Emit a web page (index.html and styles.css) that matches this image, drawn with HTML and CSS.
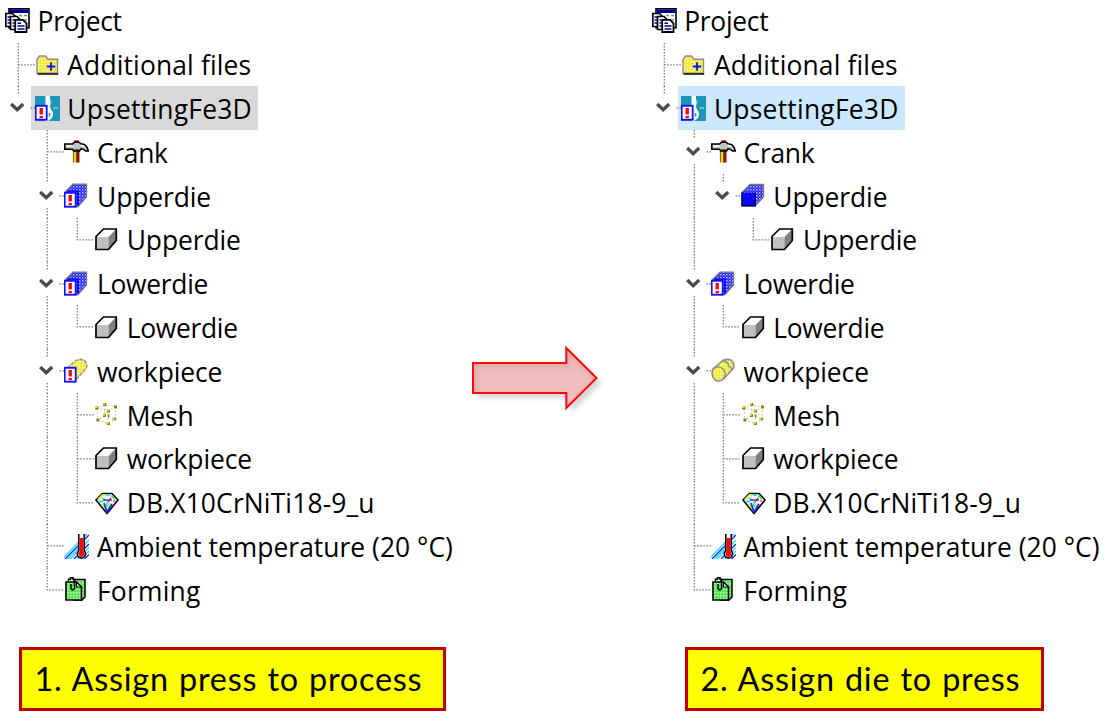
FILE: index.html
```html
<!DOCTYPE html>
<html lang="en">
<head>
<meta charset="utf-8">
<title>Press assignment</title>
<link rel="stylesheet" href="styles.css">
</head>
<body>
<svg class="defs" aria-hidden="true">
  <defs>
    <pattern id="dither-blue" width="3" height="3" patternUnits="userSpaceOnUse"><rect width="3" height="3" fill="#1a1aff"/><rect width="1.5" height="1.5" fill="#c4c4ff"/><rect x="1.5" y="1.5" width="1.2" height="1.2" fill="#8c8cff"/></pattern>
    <pattern id="dither-yellow" width="3" height="3" patternUnits="userSpaceOnUse"><rect width="3" height="3" fill="#f0ea3c"/><rect width="1.5" height="1.5" fill="#fbfbb0"/></pattern>
    <pattern id="dither-green" width="3" height="3" patternUnits="userSpaceOnUse"><rect width="3" height="3" fill="#52e552"/><rect width="1.5" height="1.5" fill="#c8ffc8"/></pattern>
  </defs>
  <symbol id="g-v" viewBox="0 0 29.7 43.8"><path class="dots" d="M16.3 0V43.8"/></symbol>
  <symbol id="g-tee" viewBox="0 0 29.7 43.8"><path class="dots" d="M16.3 0V43.8M16.3 21.9H33"/></symbol>
  <symbol id="g-end" viewBox="0 0 29.7 43.8"><path class="dots" d="M16.3 0V21.9H33"/></symbol>
  <symbol id="g-open" viewBox="0 0 29.7 43.8"><path class="dots" d="M16.3 0V8M16.3 34V43.8M28.5 21.9H34"/><path class="chev" d="M9.2 18L15.2 23.8L21.2 18"/></symbol>
  <symbol id="g-last" viewBox="0 0 29.7 43.8"><path class="dots" d="M16.3 0V8M28.5 21.9H34"/><path class="chev" d="M9.2 18L15.2 23.8L21.2 18"/></symbol>

  <symbol id="badge" viewBox="0 0 25 25"><rect x=".7" y="9.8" width="11" height="13.9" fill="#fff" stroke="#1010ff" stroke-width="1.8"/><path d="M6.2 12V18.6M6.2 20V22.3" stroke="#f00818" stroke-width="3.4"/></symbol>
  <symbol id="project" viewBox="0 0 25 25">
    <rect x="4" y=".8" width="20" height="19" fill="#fff" stroke="#000" stroke-width="1.6"/>
    <path d="M4.5 3.2H23.5" stroke="#000090" stroke-width="3.6"/><path d="M14 7.5H17M19 7.5H22M19 12H22" stroke="#888" stroke-width="1.3"/>
    <path d="M.8 5.5H7.5L10 8V18.5H.8Z" fill="#fff" stroke="#000" stroke-width="1.7"/><path d="M2.5 9H5M2.5 12H5M2.5 15H5" stroke="#000090" stroke-width="1.3"/>
    <path d="M5.5 8.5H12L15 11.5V21.5H5.5Z" fill="#fff" stroke="#000" stroke-width="1.7"/><path d="M7.5 12H9.5M7.5 15H9.5M7.5 18H9.5" stroke="#000090" stroke-width="1.3"/>
    <path d="M10.2 11.8H18L21.5 15.3V24H10.2Z" fill="#fff" stroke="#000" stroke-width="1.8"/><path d="M12.5 15.2H16M12.5 18H19.5M12.5 21H19.5" stroke="#000090" stroke-width="1.5"/>
  </symbol>
  <symbol id="folder" viewBox="0 0 25 25">
    <path d="M2 21.2V7.5L4.5 4H10.5L13 7.2H22.5V21.2Z" fill="url(#dither-yellow)" stroke="#8c8c8c" stroke-width="1.4"/>
    <path d="M2.5 22H23.2" fill="none" stroke="#222" stroke-width="1.7"/><path d="M11.8 14.5H20.2M16 10.3V18.7" stroke="#1010ff" stroke-width="1.8"/>
  </symbol>
  <symbol id="process" viewBox="0 0 25 25">
    <rect width="25" height="25" fill="#1d95b4"/><path d="M10.5 0H15V10Q15 13 17.5 15.5Q19 19 16.5 22.5L13 25H10.5Z" fill="#f4fbfd"/><path d="M15 3Q18 6 15 10" fill="#8fcbdc"/><path d="M18.5 12H23" stroke="#8fd0e0" stroke-width="1.5"/><path d="M14.5 17V20.5" stroke="#1d95b4" stroke-width="1.5"/>
    <use href="#badge"/>
  </symbol>
  <symbol id="hammer" viewBox="0 0 25 25">
    <path d="M9.5 11H12.5V23.5H9.5Z" fill="#e8e000"/><path d="M12.5 11H15.5V23.5H12.5Z" fill="#a01010"/><path d="M9.4 12V23.5M12.6 12V23.5" stroke="#4b4400" stroke-width=".8"/>
    <path d="M.8 5H8.5L10.5 3.2H15L17 4.8Q23 5 24.3 12H21.5Q19.5 9.6 17 9.8L15.5 12H9.8L8.5 10.2H.8Z" fill="#c4c4c4" stroke="#000" stroke-width="1.6"/>
    <path d="M2 6.8H9M17 6.5L20 7.2" stroke="#fff" stroke-width="1.3"/><path d="M10.2 2.3H15" stroke="#7a1010" stroke-width="1.8"/><path d="M10.5 11.3H15.2" stroke="#222" stroke-width="2"/>
  </symbol>
  <symbol id="die" viewBox="0 0 25 25">
    <path d="M1 9.5L9 1.5H22.5V14L14 22.8H1Z" fill="url(#dither-blue)" stroke="#777" stroke-width="1.3"/>
    <path d="M1 9.6H14V22.8H1Z" fill="#0808ff"/><path d="M1 9.6V22.8H14.2V10" fill="none" stroke="#000060" stroke-width="1.5"/>
  </symbol>
  <symbol id="die-alert" viewBox="0 0 25 25">
    <path d="M1 9L9 1.2H22.5V14L14 23.5H1Z" fill="url(#dither-blue)" stroke="#777" stroke-width="1.3"/><path d="M3 8.3H14V22.5" fill="none" stroke="#1010ff" stroke-width="2"/>
    <use href="#badge"/>
  </symbol>
  <symbol id="cylinder" viewBox="0 0 25 25">
    <path d="M2 11L12 2.5Q16 .5 20 2Q23.8 5.5 22.5 10L13 20.5Q9 24.5 4 22Q-.5 17 2 11Z" fill="url(#dither-yellow)" stroke="#8c8c8c" stroke-width="1.6"/>
    <path d="M2 11Q8 6.5 12.5 11.5Q15.8 15 12.5 21M12 2.8Q18 4 17.5 8L21.5 11" fill="none" stroke="#8c8c8c" stroke-width="1.4"/>
  </symbol>
  <symbol id="cylinder-alert" viewBox="0 0 25 25"><path d="M3 10L12 2.5Q16 .5 20 2Q23.8 5.5 22.5 10L13 20.5L5 22Z" fill="url(#dither-yellow)" stroke="#999" stroke-width="1.6" stroke-dasharray="4 1"/><use href="#badge"/></symbol>
  <symbol id="cube" viewBox="0 0 25 25">
    <path d="M2 9.5L9.5 2H22.3V13.5L14.5 22.5H2Z" fill="#fff"/><path d="M2 10H14.5V22.5H2Z" fill="#c0c0c0"/><path d="M14.5 10L22.3 2V13.5L14.5 22.5Z" fill="#808080"/>
    <path d="M2 9.5L9.5 2H22.3V13.5L14.5 22.5H2Z" fill="none" stroke="#000" stroke-width="1.7"/>
  </symbol>
  <symbol id="mesh" viewBox="0 0 25 25">
    <path d="M3 6L10.5 3L21.5 5V17L14 21.5L4 18ZM3 6L14 9L21.5 5M14 9V21.5M10.5 3V14L4 18M10.5 14L21 17" fill="none" stroke="#aaa" stroke-width="1.1" stroke-dasharray="1.2 2.6"/>
    <path d="M1.2 6H4.6M9 2.5H12.4M20 5H23M12.8 9H16M9 13.5H12M13.8 14H15.4M2.4 18H5.4M19.4 16.8H22.2M12.8 21.5H16" stroke="#8c8600" stroke-width="2.8"/>
    <path d="M1.2 5.3H3.5M9 1.9H11M12.8 8.4H14.8M9 13H11M19.4 16.2H21M12.8 21H14.8" stroke="#ece520" stroke-width="1.5"/>
  </symbol>
  <symbol id="diamond" viewBox="0 0 25 25">
    <path d="M2 10L8.3 3.5H18L24 10L13 23.5Z" fill="#fff" stroke="#000" stroke-width="1.6"/>
    <path d="M4 9.5L8.5 5H11" fill="none" stroke="#e8e820" stroke-width="2"/><path d="M12 5H16M8 8L13 11" stroke="#20e8f0" stroke-width="2"/><path d="M17.5 5.5L21 9" stroke="#50d850" stroke-width="2"/>
    <path d="M4.5 11.5H9" stroke="#20d8f0" stroke-width="2"/><path d="M9 10H18M14 12L17 8" stroke="#8030a0" stroke-width="1.5"/><path d="M19 11H21.5" stroke="#e040c0" stroke-width="1.5"/><path d="M7.5 14L11 18M16 13L14 17" stroke="#e8e820" stroke-width="2"/><path d="M10 13L13 22L18 14" fill="none" stroke="#1830f0" stroke-width="1.8"/><path d="M13 12V17" stroke="#20e8f0" stroke-width="1.8"/>
  </symbol>
  <symbol id="ambient" viewBox="0 0 25 25">
    <path d="M0 23L23 0M6 25L25 6M17 25L25 17" stroke="#20e0ff" stroke-width="1.5"/><path d="M1 25L25 1M10 25L25 10M20.5 25L25 20.5" stroke="#2020ff" stroke-width="1.4"/><path d="M3.5 25L15 13.5M13.5 25L25 13.5" stroke="#20e0ff" stroke-width="1.2"/>
    <path d="M14.8 0V16.5Q11.8 20 14.8 23.2Q17.5 25 20.2 23Q22.8 20 20.2 16.5V0" fill="#fff" stroke="#000" stroke-width="1.5"/><path d="M15.5 4H19.5V17Q21.6 20 19.3 22.3Q17.5 23.5 15.6 22.3Q13.4 20 15.5 17Z" fill="#f00810"/>
  </symbol>
  <symbol id="forming" viewBox="0 0 25 25">
    <path d="M10 2.5H21V20L18 23H10Z" fill="url(#dither-green)" stroke="#000" stroke-width="1.5"/><path d="M2 5H12L17.5 10V23H2Z" fill="url(#dither-green)" stroke="#000" stroke-width="1.6"/>
    <path d="M12.5 5V10H17.5Z" fill="#dfffdf" stroke="#000" stroke-width="1.2"/><path d="M4.5 4V2.2H6.5V.8H9V2.2H10.5V11.5Q8.8 14.5 7 11.5V7" fill="none" stroke="#000" stroke-width="1.5"/>
  </symbol>
</svg>

<main class="page">
  <section class="panel">
    <ul class="tree">
      <li class="row"><span class="item"><svg class="icon"><use href="#project"/></svg><span class="label snug">Project</span></span></li>
      <li class="row"><svg class="guide"><use href="#g-tee"/></svg><span class="item"><svg class="icon"><use href="#folder"/></svg><span class="label loose">Additional files</span></span></li>
      <li class="row"><svg class="guide"><use href="#g-last"/></svg><span class="item selected"><svg class="icon"><use href="#process"/></svg><span class="label looser">UpsettingFe3D</span></span></li>
      <li class="row"><i class="guide"></i><svg class="guide"><use href="#g-tee"/></svg><span class="item"><svg class="icon"><use href="#hammer"/></svg><span class="label snug">Crank</span></span></li>
      <li class="row"><i class="guide"></i><svg class="guide"><use href="#g-open"/></svg><span class="item"><svg class="icon"><use href="#die-alert"/></svg><span class="label">Upperdie</span></span></li>
      <li class="row"><i class="guide"></i><svg class="guide"><use href="#g-v"/></svg><svg class="guide"><use href="#g-end"/></svg><span class="item"><svg class="icon"><use href="#cube"/></svg><span class="label">Upperdie</span></span></li>
      <li class="row"><i class="guide"></i><svg class="guide"><use href="#g-open"/></svg><span class="item"><svg class="icon"><use href="#die-alert"/></svg><span class="label snug">Lowerdie</span></span></li>
      <li class="row"><i class="guide"></i><svg class="guide"><use href="#g-v"/></svg><svg class="guide"><use href="#g-end"/></svg><span class="item"><svg class="icon"><use href="#cube"/></svg><span class="label snug">Lowerdie</span></span></li>
      <li class="row"><i class="guide"></i><svg class="guide"><use href="#g-open"/></svg><span class="item"><svg class="icon"><use href="#cylinder-alert"/></svg><span class="label">workpiece</span></span></li>
      <li class="row"><i class="guide"></i><svg class="guide"><use href="#g-v"/></svg><svg class="guide"><use href="#g-tee"/></svg><span class="item"><svg class="icon"><use href="#mesh"/></svg><span class="label">Mesh</span></span></li>
      <li class="row"><i class="guide"></i><svg class="guide"><use href="#g-v"/></svg><svg class="guide"><use href="#g-tee"/></svg><span class="item"><svg class="icon"><use href="#cube"/></svg><span class="label">workpiece</span></span></li>
      <li class="row"><i class="guide"></i><svg class="guide"><use href="#g-v"/></svg><svg class="guide"><use href="#g-end"/></svg><span class="item"><svg class="icon"><use href="#diamond"/></svg><span class="label loose">DB.X10CrNiTi18-9_u</span></span></li>
      <li class="row"><i class="guide"></i><svg class="guide"><use href="#g-tee"/></svg><span class="item"><svg class="icon"><use href="#ambient"/></svg><span class="label even">Ambient temperature (20 °C)</span></span></li>
      <li class="row"><i class="guide"></i><svg class="guide"><use href="#g-end"/></svg><span class="item"><svg class="icon"><use href="#forming"/></svg><span class="label looser">Forming</span></span></li>
    </ul>
    <p class="caption caption-press"><span>1. Assign press to process</span></p>
  </section>

  <svg class="arrow" viewBox="0 0 150 90">
    <defs>
      <filter id="soft" x="-20%" y="-20%" width="140%" height="150%"><feGaussianBlur stdDeviation="2.6"/></filter>
      <clipPath id="arrow-clip"><path d="M13 28H106.3V13L136.5 43L106.3 73V58H13Z"/></clipPath>
    </defs>
    <path d="M13 28H106.3V13L136.5 43L106.3 73V58H13Z" transform="translate(5 5)" fill="#000" opacity=".16" filter="url(#soft)"/>
    <path d="M13 28H106.3V13L136.5 43L106.3 73V58H13Z" fill="#efbdbd"/>
    <g clip-path="url(#arrow-clip)"><path d="M15 60V31H108V16L136 44" fill="none" stroke="#d8a0a0" stroke-width="5" opacity=".6" filter="url(#soft)"/></g>
    <path d="M13 28H106.3V13L136.5 43L106.3 73V58H13Z" fill="none" stroke="#ff0808" stroke-width="2"/>
  </svg>

  <section class="panel">
    <ul class="tree">
      <li class="row"><span class="item"><svg class="icon"><use href="#project"/></svg><span class="label snug">Project</span></span></li>
      <li class="row"><svg class="guide"><use href="#g-tee"/></svg><span class="item"><svg class="icon"><use href="#folder"/></svg><span class="label loose">Additional files</span></span></li>
      <li class="row"><svg class="guide"><use href="#g-last"/></svg><span class="item selected focused"><svg class="icon"><use href="#process"/></svg><span class="label looser">UpsettingFe3D</span></span></li>
      <li class="row"><i class="guide"></i><svg class="guide"><use href="#g-open"/></svg><span class="item"><svg class="icon"><use href="#hammer"/></svg><span class="label snug">Crank</span></span></li>
      <li class="row"><i class="guide"></i><svg class="guide"><use href="#g-v"/></svg><svg class="guide"><use href="#g-last"/></svg><span class="item"><svg class="icon"><use href="#die"/></svg><span class="label">Upperdie</span></span></li>
      <li class="row"><i class="guide"></i><svg class="guide"><use href="#g-v"/></svg><i class="guide"></i><svg class="guide"><use href="#g-end"/></svg><span class="item"><svg class="icon"><use href="#cube"/></svg><span class="label">Upperdie</span></span></li>
      <li class="row"><i class="guide"></i><svg class="guide"><use href="#g-open"/></svg><span class="item"><svg class="icon"><use href="#die-alert"/></svg><span class="label snug">Lowerdie</span></span></li>
      <li class="row"><i class="guide"></i><svg class="guide"><use href="#g-v"/></svg><svg class="guide"><use href="#g-end"/></svg><span class="item"><svg class="icon"><use href="#cube"/></svg><span class="label snug">Lowerdie</span></span></li>
      <li class="row"><i class="guide"></i><svg class="guide"><use href="#g-open"/></svg><span class="item"><svg class="icon"><use href="#cylinder"/></svg><span class="label">workpiece</span></span></li>
      <li class="row"><i class="guide"></i><svg class="guide"><use href="#g-v"/></svg><svg class="guide"><use href="#g-tee"/></svg><span class="item"><svg class="icon"><use href="#mesh"/></svg><span class="label">Mesh</span></span></li>
      <li class="row"><i class="guide"></i><svg class="guide"><use href="#g-v"/></svg><svg class="guide"><use href="#g-tee"/></svg><span class="item"><svg class="icon"><use href="#cube"/></svg><span class="label">workpiece</span></span></li>
      <li class="row"><i class="guide"></i><svg class="guide"><use href="#g-v"/></svg><svg class="guide"><use href="#g-end"/></svg><span class="item"><svg class="icon"><use href="#diamond"/></svg><span class="label loose">DB.X10CrNiTi18-9_u</span></span></li>
      <li class="row"><i class="guide"></i><svg class="guide"><use href="#g-tee"/></svg><span class="item"><svg class="icon"><use href="#ambient"/></svg><span class="label even">Ambient temperature (20 °C)</span></span></li>
      <li class="row"><i class="guide"></i><svg class="guide"><use href="#g-end"/></svg><span class="item"><svg class="icon"><use href="#forming"/></svg><span class="label looser">Forming</span></span></li>
    </ul>
    <p class="caption caption-die"><span>2. Assign die to press</span></p>
  </section>
</main>
</body>
</html>
```

FILE: styles.css
```css
* { box-sizing: border-box; }

body {
  margin: 0;
  width: 1114px;
  height: 724px;
  overflow: hidden;
  background: #fff;
  color: #000;
  font-family: "Open Sans", "Noto Sans", sans-serif;
}

.defs { display: block; width: 0; height: 0; }

.page {
  display: grid;
  grid-template-columns: 460px 150px 1fr;
  column-gap: 0;
  height: 724px;
}

.panel { min-width: 0; }
.arrow + .panel { padding-left: 36.6px; }

.tree {
  list-style: none;
  margin: -1.2px 0 0;
  padding: 0 0 0 1.5px;
}

.row { display: flex; height: 43.8px; }

.guide {
  position: relative;
  z-index: 1;
  flex: none;
  width: 29.7px;
  height: 43.8px;
  overflow: visible;
}

symbol { overflow: visible; }

.dots {
  fill: none;
  stroke: #777;
  stroke-width: 1.2;
  stroke-dasharray: 1.5 1.5;
}

.chev { fill: none; stroke: #4a4a4a; stroke-width: 3.3; }

.item {
  display: flex;
  align-items: center;
  height: 43.4px;
  padding: 0 6px 0 3.5px;
}

.selected { background: #d9d9d9; }
.focused { background: #cce8ff; }

.icon { flex: none; width: 25px; height: 25px; margin-right: 7.6px; }

/* The extra top padding seats the text slightly below the icon centre. */
.label {
  padding-top: 2.6px;
  font-size: 26.4px;
  line-height: 40.8px;
  letter-spacing: -0.08px;
  white-space: pre;
}

.snug { letter-spacing: -0.28px; }
.even { letter-spacing: 0.04px; }
.loose { letter-spacing: 0.15px; }
.looser { letter-spacing: 0.25px; }

.caption {
  display: flex;
  align-items: center;
  height: 64px;
  margin: 35px 0 0 19px;
  padding-left: 12.5px;
  border: 3px solid #c00000;
  background: #ff0;
  font-family: Lato, sans-serif;
  font-size: 32.4px;
  letter-spacing: 0.75px;
  word-spacing: 1.2px;
  white-space: pre;
}

.caption-press { width: 427px; }
.caption-die { width: 359px; margin-left: 38.4px; }

.arrow { width: 150px; height: 90px; margin-top: 335px; }
```
